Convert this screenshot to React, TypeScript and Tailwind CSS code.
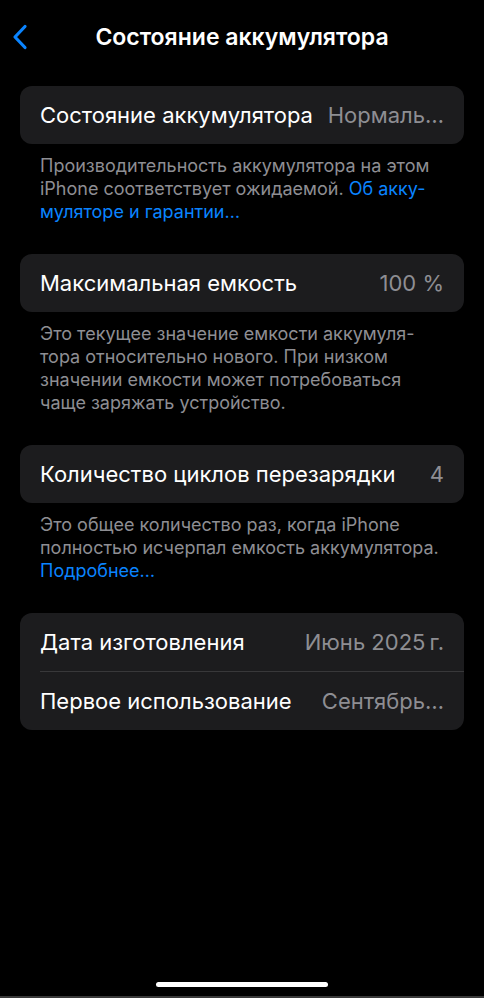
import React from "react";

type Row = { label: string; value: string };

function Card({ rows }: { rows: Row[] }) {
  return (
    <div className="rounded-[12px] bg-[#1c1c1e] overflow-hidden">
      {rows.map((r, i) => (
        <div key={r.label}>
          {i > 0 && <div className="ml-5 h-px bg-[#38383a]" />}
          <div className="h-[58px] px-5 flex items-center justify-between gap-3 text-[22px] whitespace-nowrap">
            <span className="text-white">{r.label}</span>
            <span className="text-[#8e8e93]">{r.value}</span>
          </div>
        </div>
      ))}
    </div>
  );
}

function Footer({ children }: { children: React.ReactNode }) {
  return (
    <p className="px-5 pt-[10px] pb-[31px] text-[18px] leading-[23px] text-[#8e8e93] whitespace-nowrap">
      {children}
    </p>
  );
}

export default function App() {
  return (
    <div
      className="min-h-[998px] w-full bg-black flex flex-col text-white"
      style={{ fontFamily: "Inter, 'Noto Sans', sans-serif" }}
    >
      {/* Nav bar */}
      <header className="h-[74px] grid grid-cols-[60px_1fr_60px] items-center">
        <div className="pl-3 flex items-center">
          <svg width="16" height="26" viewBox="0 0 16 26" fill="none">
            <path
              d="M13 2.5 L3 13 L13 23.5"
              stroke="#0a84ff"
              strokeWidth="3.2"
              strokeLinecap="round"
              strokeLinejoin="round"
            />
          </svg>
        </div>
        <h1 className="text-center text-[23px] font-semibold whitespace-nowrap">
          Состояние аккумулятора
        </h1>
        <div />
      </header>

      <main className="mt-3 px-5">
        <Card rows={[{ label: "Состояние аккумулятора", value: "Нормаль…" }]} />
        <Footer>
          Производительность аккумулятора на этом
          <br />
          iPhone соответствует ожидаемой.{" "}
          <span className="text-[#0a84ff]">
            Об акку-
            <br />
            муляторе и гарантии…
          </span>
        </Footer>

        <Card rows={[{ label: "Максимальная емкость", value: "100 %" }]} />
        <Footer>
          Это текущее значение емкости аккумуля-
          <br />
          тора относительно нового. При низком
          <br />
          значении емкости может потребоваться
          <br />
          чаще заряжать устройство.
        </Footer>

        <Card rows={[{ label: "Количество циклов перезарядки", value: "4" }]} />
        <Footer>
          Это общее количество раз, когда iPhone
          <br />
          полностью исчерпал емкость аккумулятора.
          <br />
          <span className="text-[#0a84ff]">Подробнее…</span>
        </Footer>

        <Card
          rows={[
            { label: "Дата изготовления", value: "Июнь 2025\u202Fг." },
            { label: "Первое использование", value: "Сентябрь…" },
          ]}
        />
      </main>

      <div className="flex-1" />

      {/* Home indicator */}
      <div className="flex justify-center pb-[9px]">
        <div className="w-[172px] h-[5px] rounded-full bg-white" />
      </div>
      <div className="h-[2px] bg-[#3a3a3a]" />
    </div>
  );
}
